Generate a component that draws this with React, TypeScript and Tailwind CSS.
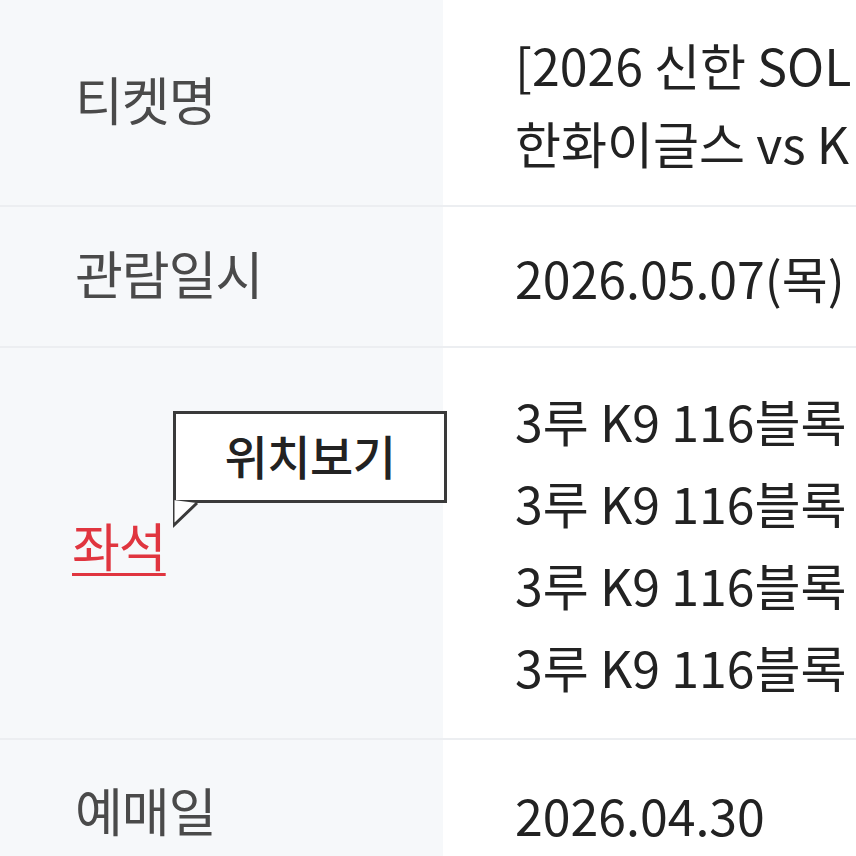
const rows = [
  { label: "티켓명", lines: ["[2026 신한 SOL", "한화이글스 vs K"], h: "h-[207px]" },
  { label: "관람일시", lines: ["2026.05.07(목)"], h: "h-[141px]" },
]

function Cell({ label, lines, h }: { label: string; lines: string[]; h: string }) {
  return (
    <div className={`flex ${h} border-b-2 border-[#eceef1]`}>
      <div className="w-[443px] shrink-0 bg-[#f6f8fa] flex items-center pl-[75px] pb-[8px] text-[52px] tracking-[-1px] text-[#4a4a4a]">
        {label}
      </div>
      <div className="flex-1 flex flex-col justify-center pl-[72px] text-[#222] whitespace-nowrap overflow-hidden">
        {lines.map((l) => (
          <div key={l} className="leading-[78px]">{l}</div>
        ))}
      </div>
    </div>
  )
}

export default function App() {
  return (
    <div
      className="w-[856px] h-[856px] overflow-hidden bg-white text-[50px]"
      style={{ fontFamily: '"Noto Sans CJK KR", "Noto Sans", sans-serif' }}
    >
      {rows.map((r) => (
        <Cell key={r.label} {...r} />
      ))}

      {/* Seat row */}
      <div className="flex h-[392px] border-b-2 border-[#eceef1]">
        <div className="relative w-[443px] shrink-0 bg-[#f6f8fa] flex items-center pl-[72px]">
          <span className="text-[52px] tracking-[-1px] text-[#e0353f] underline decoration-[3px] underline-offset-[6px] mt-[4px]">좌석</span>
          <div className="absolute left-[173px] top-[63px] w-[274px] h-[92px] border-[3px] border-[#3a3a3a] bg-white flex items-center justify-center pb-[4px] text-[47px] font-medium tracking-[-0.5px] text-[#222]">
            위치보기
            <svg className="absolute left-[-3px] top-[86px]" width="30" height="30" viewBox="0 0 30 30">
              <path d="M0 0 L0 26 L24 3" fill="white" stroke="#3a3a3a" strokeWidth="3" />
            </svg>
          </div>
        </div>
        <div className="flex-1 flex flex-col justify-center pl-[72px] text-[#222] whitespace-nowrap overflow-hidden">
          {[0, 1, 2, 3].map((i) => (
            <div key={i} className="leading-[82px]">3루 K9 116블록</div>
          ))}
        </div>
      </div>

      <Cell label="예매일" lines={["2026.04.30"]} h="h-[150px]" />
    </div>
  )
}
